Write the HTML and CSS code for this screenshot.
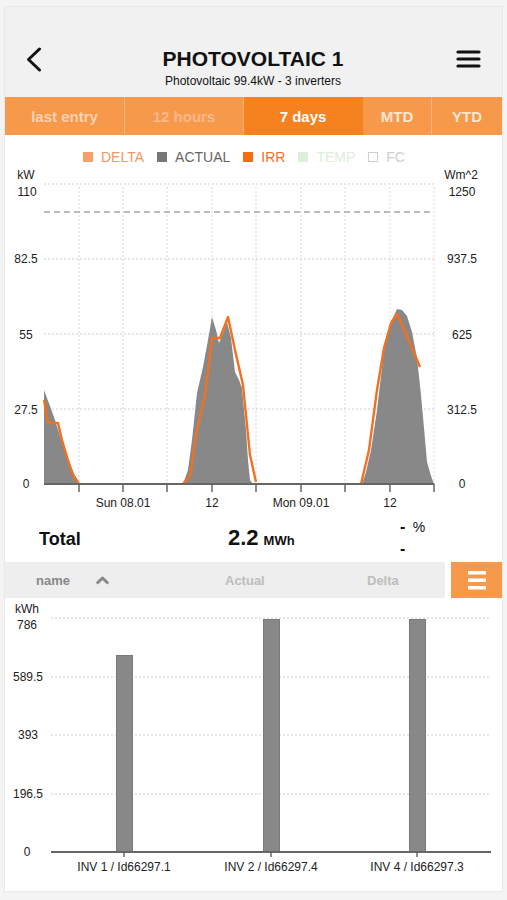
FILE: index.html
```html
<!DOCTYPE html>
<html>
<head>
<meta charset="utf-8">
<link rel="stylesheet" href="styles.css">
</head>
<body>
<div class="card">
  <header class="header">
    <svg class="back" width="17" height="25" viewBox="0 0 17 25"><path d="M14.5 2 L3.5 12.5 L14.5 23" fill="none" stroke="#111" stroke-width="3" stroke-linecap="round" stroke-linejoin="round"/></svg>
    <div class="titles">
      <div class="title">PHOTOVOLTAIC 1</div>
      <div class="subtitle">Photovoltaic 99.4kW - 3 inverters</div>
    </div>
    <svg class="menu" width="25" height="18" viewBox="0 0 25 18"><g stroke="#111" stroke-width="3.2" stroke-linecap="round"><line x1="2" y1="2" x2="23" y2="2"/><line x1="2" y1="9" x2="23" y2="9"/><line x1="2" y1="16" x2="23" y2="16"/></g></svg>
  </header>
  <nav class="tabs">
    <div class="tab t-last">last entry</div>
    <div class="tab t-12">12 hours</div>
    <div class="tab t-active">7 days</div>
    <div class="tab t-mtd">MTD</div>
    <div class="tab t-ytd">YTD</div>
  </nav>
  <div class="legend">
    <span class="lg"><i class="sq sq-delta"></i><span class="lt-delta">DELTA</span></span>
    <span class="lg"><i class="sq sq-actual"></i><span class="lt-actual">ACTUAL</span></span>
    <span class="lg"><i class="sq sq-irr"></i><span class="lt-irr">IRR</span></span>
    <span class="lg"><i class="sq sq-temp"></i><span class="lt-temp">TEMP</span></span>
    <span class="lg"><i class="sq sq-fc"></i><span class="lt-fc">FC</span></span>
  </div>
  <svg class="chart" width="497" height="350" viewBox="0 0 497 350">
    <g transform="translate(-5,-165)">
      <g class="vgrid" stroke="#d9d9d9" stroke-width="1" stroke-dasharray="2 2">
        <line x1="79" y1="187" x2="79" y2="484"/><line x1="123" y1="187" x2="123" y2="484"/>
        <line x1="167" y1="187" x2="167" y2="484"/><line x1="212" y1="187" x2="212" y2="484"/>
        <line x1="256" y1="187" x2="256" y2="484"/><line x1="301" y1="187" x2="301" y2="484"/>
        <line x1="345" y1="187" x2="345" y2="484"/><line x1="390" y1="187" x2="390" y2="484"/>
        <line x1="434" y1="187" x2="434" y2="484"/>
      </g>
      <g stroke="#cfcfcf" stroke-width="1" stroke-dasharray="2 2">
        <line x1="44" y1="184" x2="436" y2="184"/><line x1="44" y1="259" x2="436" y2="259"/>
        <line x1="44" y1="334" x2="436" y2="334"/><line x1="44" y1="409" x2="436" y2="409"/>
      </g>
      <line x1="44" y1="212" x2="434" y2="212" stroke="#a6a6a6" stroke-width="1.6" stroke-dasharray="6 4"/>
      <g fill="#888888">
        <polygon points="44,390 47,398 50,406 55,420 60,436 65,450 70,463 75,476 78,482 79,484 44,484"/>
        <polygon points="183,484 188,470 192,440 197,393 203,367 208,340 212,317 216,330 219,343 223,333 227,322 231,338 235,372 239,380 242,388 246,430 248,460 250,480 253,484"/>
        <polygon points="362,484 366,472 371,450 377,410 384,350 391,322 397,309 402,310 407,316 412,332 417,358 421,395 424,428 427,462 431,476 434,484"/>
      </g>
      <g fill="none" stroke="#f37021" stroke-width="2.4" stroke-linejoin="round">
        <polyline points="44,400 48,423 58,423 62,440 67,457 72,473 79,484"/>
        <polyline points="183,484 190,476 197,430 205,395 212,338 220,338 228,317 235,350 243,385 250,455 256,482"/>
        <polyline points="361,484 369,450 377,390 384,348 391,323 397,314 407,336 420,367"/>
      </g>
      <line x1="44" y1="484" x2="434" y2="484" stroke="#666" stroke-width="2"/>
      <g stroke="#666" stroke-width="1.5">
        <line x1="79" y1="484" x2="79" y2="492"/><line x1="123" y1="484" x2="123" y2="492"/>
        <line x1="167" y1="484" x2="167" y2="492"/><line x1="212" y1="484" x2="212" y2="492"/>
        <line x1="256" y1="484" x2="256" y2="492"/><line x1="301" y1="484" x2="301" y2="492"/>
        <line x1="345" y1="484" x2="345" y2="492"/><line x1="390" y1="484" x2="390" y2="492"/>
        <line x1="434" y1="484" x2="434" y2="492"/>
      </g>
      <g class="axis-text" text-anchor="middle">
        <text x="26" y="179">kW</text>
        <text x="27" y="196">110</text>
        <text x="26" y="263">82.5</text>
        <text x="26" y="339">55</text>
        <text x="26" y="414">27.5</text>
        <text x="26" y="488">0</text>
        <text x="461" y="179">Wm^2</text>
        <text x="462" y="196">1250</text>
        <text x="462" y="263">937.5</text>
        <text x="462" y="339">625</text>
        <text x="462" y="414">312.5</text>
        <text x="462" y="488">0</text>
        <text x="123" y="507">Sun 08.01</text>
        <text x="212" y="507">12</text>
        <text x="301" y="507">Mon 09.01</text>
        <text x="390" y="507">12</text>
      </g>
    </g>
  </svg>
  <div class="total">
    <div class="total-label">Total</div>
    <div class="total-value"><span class="num">2.2</span><span class="unit">MWh</span></div>
    <div class="total-delta"><div><b>-</b> <span class="pct">%</span></div><div><b>-</b></div></div>
  </div>
  <div class="table-head">
    <div class="th-bar">
      <span class="th-name">name</span>
      <span class="th-sort"><svg width="15" height="9" viewBox="0 0 15 9"><path d="M1.8 7.5 L7.5 2 L13.2 7.5" fill="none" stroke="#888" stroke-width="3" stroke-linejoin="round"/></svg></span>
      <span class="th-actual">Actual</span>
      <span class="th-delta">Delta</span>
    </div>
    <div class="th-btn">
      <svg width="18" height="19" viewBox="0 0 18 19"><g fill="#fff"><rect x="0" y="0" width="18" height="3.5"/><rect x="0" y="7.5" width="18" height="3.5"/><rect x="0" y="15" width="18" height="3.5"/></g></svg>
    </div>
  </div>
  <svg class="bars" width="497" height="293" viewBox="0 0 497 293">
    <g transform="translate(-5,-598)">
      <g stroke="#cfcfcf" stroke-width="1" stroke-dasharray="2 2">
        <line x1="51" y1="618" x2="491" y2="618"/><line x1="51" y1="677" x2="491" y2="677"/>
        <line x1="51" y1="735" x2="491" y2="735"/><line x1="51" y1="794" x2="491" y2="794"/>
      </g>
      <g fill="#888888" stroke="#7a7a7a" stroke-width="1">
        <rect x="116.5" y="655.5" width="16" height="197"/>
        <rect x="263.5" y="619.5" width="16" height="233"/>
        <rect x="409.5" y="619.5" width="16" height="233"/>
      </g>
      <line x1="51" y1="852" x2="491" y2="852" stroke="#666" stroke-width="2"/>
      <g stroke="#666" stroke-width="1.5">
        <line x1="124" y1="852" x2="124" y2="857"/><line x1="271" y1="852" x2="271" y2="857"/><line x1="417" y1="852" x2="417" y2="857"/>
      </g>
      <g class="axis-text" text-anchor="middle">
        <text x="27" y="613">kWh</text>
        <text x="27" y="629">786</text>
        <text x="28" y="681">589.5</text>
        <text x="28" y="739">393</text>
        <text x="28" y="798">196.5</text>
        <text x="27" y="856">0</text>
        <text x="124" y="871">INV 1 / Id66297.1</text>
        <text x="271" y="871">INV 2 / Id66297.4</text>
        <text x="417" y="871">INV 4 / Id66297.3</text>
      </g>
    </g>
  </svg>
</div>
</body>
</html>
```
FILE: styles.css
```css
html, body {
  margin: 0;
  padding: 0;
}
body {
  background: #f4f4f4;
  font-family: "Liberation Sans", Arial, sans-serif;
  color: #111;
}
.card {
  width: 497px;
  margin: 7px 5px 9px 5px;
  background: #fff;
  box-shadow: 0 0 0 1px #e9e9e9;
}
.header {
  height: 90px;
  box-sizing: border-box;
  background: #f1f1f1;
  display: grid;
  grid-template-columns: 1fr auto 1fr;
  align-items: start;
  padding: 40px 21px 0 20px;
}
.back {
  display: block;
  justify-self: start;
}
.menu {
  display: block;
  justify-self: end;
  margin-top: 3px;
}
.titles {
  text-align: center;
}
.title {
  font-size: 21px;
  line-height: 24px;
  font-weight: bold;
  color: #111;
}
.subtitle {
  font-size: 12px;
  line-height: 15px;
  margin-top: 3px;
  color: #111;
}
.tabs {
  display: flex;
  height: 38px;
  background: #f7994b;
}
.tab {
  display: flex;
  align-items: center;
  justify-content: center;
  font-size: 15px;
  font-weight: bold;
  box-sizing: border-box;
  border-right: 1px solid #f9b57c;
}
.t-last { width: 120px; color: #fcd3b1; }
.t-12 { width: 119px; color: #fab88b; }
.t-active { width: 119px; background: #f5821f; color: #fff; border-right-color: #f5821f; }
.t-mtd { width: 69px; color: #fde6d2; }
.t-ytd { width: 70px; color: #fde6d2; border-right: none; }
.legend {
  height: 30px;
  box-sizing: border-box;
  padding: 13px 0 0 78px;
  display: flex;
  font-size: 14px;
  line-height: 16px;
}
.lg {
  display: flex;
  align-items: center;
  margin-right: 13px;
}
.sq {
  display: block;
  width: 10px;
  height: 10px;
  margin-right: 8px;
  box-sizing: border-box;
}
.sq-delta { background: #f6a06a; }
.sq-actual { background: #777; }
.sq-irr { background: #f96b10; }
.sq-temp { background: #dcefd8; }
.sq-fc { border: 1px solid #cfcfcf; background: #fff; }
.lt-delta { color: #f5975d; }
.lt-actual { color: #666; }
.lt-irr { color: #f37021; }
.lt-temp { color: #dcefd8; }
.lt-fc { color: #cfcfcf; }
.chart, .bars {
  display: block;
}
.axis-text {
  font-family: "Liberation Sans", Arial, sans-serif;
  font-size: 12px;
  fill: #222;
}
.total {
  height: 47px;
  display: grid;
  grid-template-columns: 223px 172px 1fr;
}
.total-label {
  padding: 14px 0 0 34px;
  font-size: 18px;
  line-height: 20px;
  font-weight: bold;
}
.total-value {
  display: flex;
  align-items: baseline;
  padding-top: 11px;
  line-height: 24px;
  font-weight: bold;
}
.num {
  font-size: 22px;
}
.unit {
  font-size: 13px;
  margin-left: 5px;
}
.total-delta {
  padding-top: 1px;
  line-height: 22px;
  font-size: 16px;
}
.total-delta b {
  font-weight: bold;
}
.pct {
  font-size: 14px;
  margin-left: 3px;
}
.table-head {
  height: 36px;
  display: flex;
  gap: 6px;
}
.th-bar {
  width: 440px;
  background: #eeeeee;
  border-radius: 0 2px 2px 0;
  display: flex;
  align-items: center;
  padding-left: 31px;
  box-sizing: border-box;
  font-size: 13px;
  font-weight: bold;
}
.th-name { width: 59px; color: #888; }
.th-sort { width: 130px; display: flex; align-items: center; }
.th-sort svg { display: block; }
.th-actual { width: 142px; color: #bdbdbd; }
.th-delta { color: #bdbdbd; }
.th-btn {
  flex: 1;
  background: #f7994b;
  display: flex;
  align-items: center;
  justify-content: center;
}
.th-btn svg { display: block; }
```
